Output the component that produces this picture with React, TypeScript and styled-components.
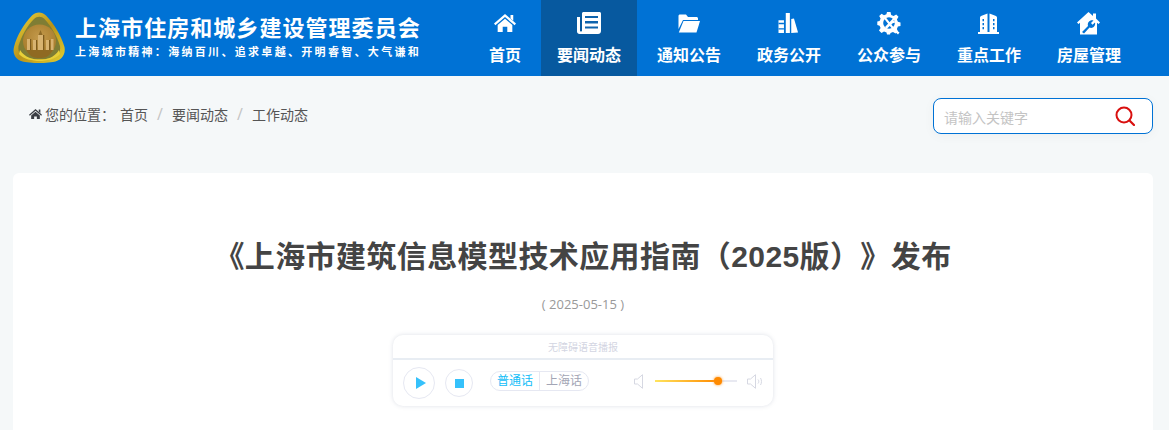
import React from "react";
import styled, { createGlobalStyle } from "styled-components";

const GlobalStyle = createGlobalStyle`
  html, body {
    margin: 0;
    padding: 0;
    height: 430px;
    overflow: hidden;
    background: #f5f8f9;
    font-family: "Open Sans", "Noto Sans CJK SC", sans-serif;
    text-spacing-trim: space-all;
  }
  * { box-sizing: border-box; }
`;

const Header = styled.header`
  height: 76px;
  background: #0072d5;
  display: flex;
  justify-content: space-between;
  padding: 0 32px 0 13px;
`;

const Brand = styled.div`
  display: flex;
  align-items: center;
  gap: 9px;
  padding-bottom: 1px;
`;

const BrandText = styled.div`
  color: #fff;
  display: flex;
  flex-direction: column;
  gap: 2px;
  margin-bottom: 3px;
`;

const BrandTitle = styled.div`
  font-size: 22px;
  line-height: 30px;
  font-weight: 700;
  letter-spacing: 1.05px;
  white-space: nowrap;
`;

const BrandMotto = styled.div`
  font-size: 11px;
  line-height: 16px;
  font-weight: 700;
  letter-spacing: 2.31px;
  white-space: nowrap;
`;

const Nav = styled.nav`
  display: flex;
  gap: 4px;
`;

const NavItem = styled.a<{ $active?: boolean }>`
  display: flex;
  flex-direction: column;
  align-items: center;
  padding: 11px 16px 0;
  color: #fff;
  font-size: 16px;
  line-height: 24px;
  font-weight: 700;
  white-space: nowrap;
  background: ${({ $active }) => ($active ? "#07599f" : "transparent")};
`;

const NavIcon = styled.span`
  height: 24px;
  margin-bottom: 8px;
  display: flex;
  align-items: center;
  justify-content: center;
`;

const TopBar = styled.div`
  height: 97px;
  display: flex;
  justify-content: space-between;
  align-items: flex-start;
  padding: 22px 16px 0 29px;
`;

const Crumbs = styled.div`
  display: flex;
  align-items: center;
  height: 32px;
  font-size: 14px;
  color: #555;
`;

const CrumbIcon = styled.span`
  display: flex;
  margin-right: 3px;
`;

const CrumbLabel = styled.span`
  margin-right: 5px;
  white-space: nowrap;
`;

const CrumbSep = styled.span`
  color: #c4c4c4;
  width: 24px;
  text-align: center;
  font-size: 16px;
`;

const SearchBox = styled.div`
  width: 220px;
  height: 36px;
  background: #fff;
  border: 1px solid #0072d5;
  border-radius: 8px;
  box-shadow: 0 2px 12px rgba(0, 0, 0, 0.04);
  display: flex;
  align-items: center;
  justify-content: space-between;
  padding: 0 17px 0 10px;
`;

const SearchHint = styled.span`
  font-size: 14px;
  color: #c4c4c4;
  margin-top: 1px;
`;

const Card = styled.main`
  margin: 0 16px 0 13px;
  height: 257px;
  background: #fff;
  border-radius: 6px 6px 0 0;
  padding-top: 62px;
  display: flex;
  flex-direction: column;
  align-items: center;
`;

const Title = styled.h1`
  margin: 0;
  font-family: "Liberation Sans", "Noto Sans CJK SC", sans-serif;
  font-size: 30px;
  line-height: 44px;
  font-weight: 700;
  letter-spacing: 0.4px;
  color: #444;
  white-space: nowrap;
`;

const DateLine = styled.div`
  margin-top: 16px;
  font-size: 13px;
  line-height: 18px;
  color: #999;
`;

const Player = styled.div`
  margin-top: 22px;
  width: 380px;
  height: 71px;
  border-radius: 10px;
  background: #fff;
  box-shadow: 0 0 4px rgba(120, 130, 160, 0.25);
  display: flex;
  flex-direction: column;
`;

const PlayerHead = styled.div`
  height: 25px;
  border-bottom: 2px solid #e8edf3;
  text-align: center;
  font-size: 10px;
  line-height: 24px;
  color: #d3d5e2;
`;

const PlayerBody = styled.div`
  flex: 1;
  display: flex;
  align-items: center;
  padding: 0 10px;
`;

const RoundButton = styled.div<{ $size: number }>`
  width: ${({ $size }) => $size}px;
  height: ${({ $size }) => $size}px;
  margin-right: 10px;
  border-radius: 50%;
  border: 1px solid #e6e8f2;
  display: flex;
  align-items: center;
  justify-content: center;
`;

const Triangle = styled.span`
  width: 0;
  height: 0;
  margin-left: 3px;
  border-left: 10px solid #35c1fb;
  border-top: 6.5px solid transparent;
  border-bottom: 6.5px solid transparent;
`;

const StopMark = styled.span`
  width: 9px;
  height: 9px;
  background: #35c1fb;
`;

const LangSwitch = styled.div`
  margin-left: 7px;
  margin-bottom: 5px;
  height: 20px;
  border: 1px solid #e6e8f2;
  border-radius: 10px;
  display: flex;
  align-items: center;
  font-size: 12px;
`;

const LangOption = styled.span<{ $active?: boolean }>`
  padding: 0 6px;
  line-height: 18px;
  color: ${({ $active }) => ($active ? "#12bdf8" : "#a3a5b5")};
  border-left: ${({ $active }) => ($active ? "none" : "1px solid #e6e8f2")};
`;

const Volume = styled.div`
  margin-left: auto;
  margin-bottom: 4px;
  display: flex;
  align-items: center;
  gap: 10px;
`;

const Track = styled.div`
  width: 82px;
  height: 2px;
  background: #e8e9f1;
  position: relative;
`;

const TrackFill = styled.div`
  height: 2px;
  background: linear-gradient(90deg, #ffe45e, #ff8a00);
`;

const TrackKnob = styled.span`
  position: absolute;
  top: -3px;
  width: 8px;
  height: 8px;
  margin-left: -4px;
  border-radius: 50%;
  background: #ff8a00;
  box-shadow: 0 0 3px #ff9a2a;
`;

const Logo = () => (
  <svg width="53" height="51" viewBox="0 0 53 51">
    <defs>
      <linearGradient id="rim" x1="0" y1="0" x2="1" y2="1">
        <stop offset="0" stopColor="#efd93f" />
        <stop offset="0.5" stopColor="#b8921a" />
        <stop offset="1" stopColor="#e3cf30" />
      </linearGradient>
      <radialGradient id="disc" cx="0.5" cy="0.4" r="0.7">
        <stop offset="0" stopColor="#c49a4c" />
        <stop offset="1" stopColor="#a27726" />
      </radialGradient>
    </defs>
    <path
      d="M19 3.500C23 -.5 29 -.5 33 3.500C41 12 48 23 51.500 35C53 43 48 49 40 50C31 51.500 21 51.500 12 50C4 49 -1 43 1 35C4 23 11 12 19 3.500Z"
      fill="url(#rim)"
    />
    <path
      d="M21 7C24 4 28.500 4 31.500 7C38 14 44 24 47 34C48 41 44 45.500 38 46.500C30 47.500 22 47.500 14.500 46.500C8.500 45.500 4.500 41 5.500 34C8.500 24 14 14 21 7Z"
      fill="#7f7d34"
    />
    <circle cx="26.500" cy="29" r="16.500" fill="url(#disc)" />
    <path d="M13 38H40C36 45 32 46 26.500 46C21 46 17 45 13 38Z" fill="#8f6a22" />
    <path
      d="M14 27h3v11h-3zM20 28h3v10h-3zM25 23h5v15h-5zM33 28h3v10h-3zM38 27h2.500v11H38z"
      fill="#d8b370"
    />
    <path d="M17 27h1.200v11H17zM23 28h1.200v10H23zM30 23h1.300v15H30zM36 28h1.200v10H36z" fill="#7d5a1c" />
    <path d="M25.500 23l2-5 2 5z" fill="#8e6a26" />
    <path d="M7 38C12 46 20 47.500 27 47.500C34 47.500 41 46 46 38L47 42C43 47 33 49 26.500 49C20 49 10 47 6 42Z" fill="#e8d038" />
  </svg>
);

const HomeGlyph = ({ width, color }: { width: number; color: string }) => (
  <svg width={width} viewBox="0 0 24 20">
    <path d="M12 0L24 10.500L22.500 12.300L12 3.400L1.500 12.300L0 10.500Z" fill={color} />
    <path d="M18 1H21V7.500L18 5Z" fill={color} />
    <path d="M4 12L12 5.200L20 12V20H14.500V14H9.500V20H4Z" fill={color} />
  </svg>
);

const NewsIcon = () => (
  <svg width="24" height="22" viewBox="0 0 24 22">
    <path
      d="M5 1.500C5 .7 5.700 0 6.500 0H22.500C23.300 0 24 .7 24 1.500V19C24 20.700 22.700 22 21 22H2.500C1.100 22 0 20.900 0 19.500V5H3V18.500C3 19.100 3.400 19.500 4 19.500S5 19.100 5 18.500Z"
      fill="#fff"
    />
    <path d="M8 4H21V6H8zM8 9H21V11.500H8zM8 14.500H21V16.500H8z" fill="#0f64ad" />
  </svg>
);

const FolderIcon = () => (
  <svg width="22" height="19" viewBox="0 0 22 19">
    <path d="M.5 15V2C.5 1 1.200 .5 2 .5H8L10 3H18.500C19.300 3 20 3.700 20 4.500V6H5L.5 15Z" fill="#fff" />
    <path d="M5.500 7H22L18.500 18.500H.8Z" fill="#fff" />
  </svg>
);

const BooksIcon = () => (
  <svg width="21" height="20" viewBox="0 0 22 22">
    <path d="M0 8H6V22H0zM8 0H12.500V22H8z" fill="#fff" />
    <path d="M14 6.500L17 6L21.500 21.500L14 22Z" fill="#fff" />
    <path d="M0 11.500H6M0 17.500H6" stroke="#0072d5" strokeWidth="1.500" />
  </svg>
);

const GearIcon = () => (
  <svg width="24" height="24" viewBox="0 0 24 24">
    <path
      d="M10 1H13.500L14.200 4L16.600 5L19.200 3.400L21.500 5.800L19.900 8.400L20.900 10.800L23.500 11.500V15L20.900 15.600L19.900 18L21 20.500L18.500 22.500L16 21L13.500 22L13 23.500H10L9.500 21.500L7 20.500L4.500 22L2 19.600L3.600 17L2.600 14.700L.3 14V10.500L2.600 9.900L3.600 7.400L2.200 5L4.600 2.700L7 4.200L9.400 3.300Z"
      fill="#fff"
    />
    <circle cx="12" cy="12" r="5.800" fill="#0072d5" />
    <path d="M7 7.500L8.500 6L18 18L22.500 21.500L21 23.500L16 19Z" fill="#fff" />
    <path d="M8 16L15 8.500C15.500 7.500 17 7 18 7.500L16.500 9.500L17.500 10.500L19 9C19.500 11 17.500 12.500 16 12L9.500 18Z" fill="#fff" />
  </svg>
);

const TowerIcon = () => (
  <svg width="21" height="21" viewBox="0 0 21 21">
    <path d="M2 19V4.500Q2 3.500 3 3L9.500 .5V19ZM11.500 .5L18 3Q19 3.500 19 4.500V19H11.500Z" fill="#fff" />
    <path d="M0 19H21V21H0Z" fill="#fff" />
    <path
      d="M4.500 6h1.500v2.200h-1.500zM4.500 10h1.500v2.200h-1.500zM4.500 14h1.500v2.200h-1.500zM15 6h1.500v2.200h-1.500zM15 10h1.500v2.200h-1.500zM15 14h1.500v2.200h-1.500z"
      fill="#0072d5"
    />
  </svg>
);

const HouseIcon = () => (
  <svg width="23" height="23" viewBox="0 0 23 23">
    <path
      d="M11.500 0L16 4V1.500H19V6.600L23 10.500L21.500 12L20 10.700V22.500H3V10.700L1.500 12L0 10.500Z"
      fill="#fff"
    />
    <path
      d="M5 20L11 14C10 10.500 13 7.500 16.500 8.500L14 11L15.500 12.800L18 10.500C19 14 15.500 17 12.500 15.500L7 21.500Z"
      fill="#0072d5"
    />
  </svg>
);

const SearchGlyph = () => (
  <svg width="20" height="20" viewBox="0 0 20 20" fill="none">
    <circle cx="9" cy="9" r="7.500" stroke="#d9100f" strokeWidth="2" />
    <path d="M14.500 14.500L19 19" stroke="#d9100f" strokeWidth="2.200" strokeLinecap="round" />
  </svg>
);

const QuietSpeaker = styled.svg`
  margin-right: 2px;
`;

const LoudSpeaker = () => (
  <svg width="16" height="15" viewBox="0 0 16 15" fill="none" stroke="#d6d8e2" strokeWidth="1">
    <path d="M.5 5H3.500L8.500 .7V14.300L3.500 10H.5Z" />
    <path d="M11 5.500C12 6.800 12 8.200 11 9.500M13.500 4C14.800 6 14.800 9 13.500 11" />
  </svg>
);

const navItems = [
  { label: "首页", icon: <HomeGlyph width={22} color="#fff" /> },
  { label: "要闻动态", icon: <NewsIcon />, active: true },
  { label: "通知公告", icon: <FolderIcon /> },
  { label: "政务公开", icon: <BooksIcon /> },
  { label: "公众参与", icon: <GearIcon /> },
  { label: "重点工作", icon: <TowerIcon /> },
  { label: "房屋管理", icon: <HouseIcon /> },
];

const VOLUME = 77;

export default function App() {
  return (
    <>
      <GlobalStyle />
      <Header>
        <Brand>
          <Logo />
          <BrandText>
            <BrandTitle>上海市住房和城乡建设管理委员会</BrandTitle>
            <BrandMotto>上海城市精神：海纳百川、追求卓越、开明睿智、大气谦和</BrandMotto>
          </BrandText>
        </Brand>
        <Nav>
          {navItems.map((item) => (
            <NavItem key={item.label} $active={item.active}>
              <NavIcon>{item.icon}</NavIcon>
              {item.label}
            </NavItem>
          ))}
        </Nav>
      </Header>
      <TopBar>
        <Crumbs>
          <CrumbIcon>
            <HomeGlyph width={13} color="#3b3f45" />
          </CrumbIcon>
          <CrumbLabel>您的位置：</CrumbLabel>
          <span>首页</span>
          <CrumbSep>/</CrumbSep>
          <span>要闻动态</span>
          <CrumbSep>/</CrumbSep>
          <span>工作动态</span>
        </Crumbs>
        <SearchBox>
          <SearchHint>请输入关键字</SearchHint>
          <SearchGlyph />
        </SearchBox>
      </TopBar>
      <Card>
        <Title>《上海市建筑信息模型技术应用指南（2025版）》发布</Title>
        <DateLine>( 2025-05-15 )</DateLine>
        <Player>
          <PlayerHead>无障碍语音播报</PlayerHead>
          <PlayerBody>
            <RoundButton $size={32}>
              <Triangle />
            </RoundButton>
            <RoundButton $size={28}>
              <StopMark />
            </RoundButton>
            <LangSwitch>
              <LangOption $active>普通话</LangOption>
              <LangOption>上海话</LangOption>
            </LangSwitch>
            <Volume>
              <QuietSpeaker width="9" height="15" viewBox="0 0 9 15" fill="none" stroke="#d6d8e2" strokeWidth="1">
                <path d="M.5 5H3.500L8.500 .7V14.300L3.500 10H.5Z" />
              </QuietSpeaker>
              <Track>
                <TrackFill style={{ width: `${VOLUME}%` }} />
                <TrackKnob style={{ left: `${VOLUME}%` }} />
              </Track>
              <LoudSpeaker />
            </Volume>
          </PlayerBody>
        </Player>
      </Card>
    </>
  );
}
